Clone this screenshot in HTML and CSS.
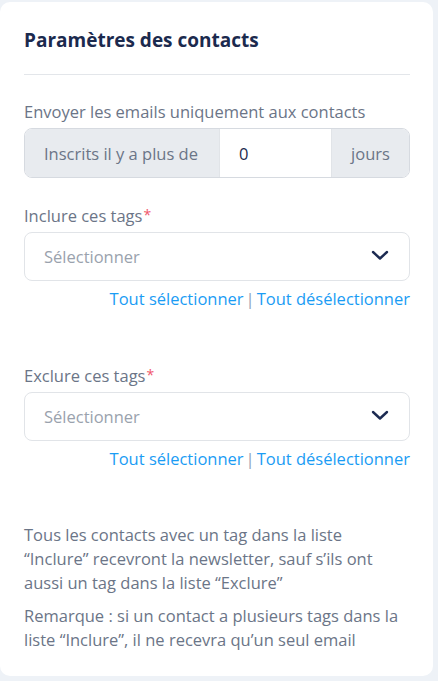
FILE: index.html
```html
<!DOCTYPE html>
<html lang="fr">
<head>
<meta charset="utf-8">
<link rel="stylesheet" href="styles.css">
</head>
<body>
<div class="card">
  <h2 class="title">Paramètres des contacts</h2>
  <hr class="divider">
  <div class="field">
    <div class="label">Envoyer les emails uniquement aux contacts</div>
    <div class="input-group">
      <span class="addon addon-left">Inscrits il y a plus de</span>
      <span class="input-value">0</span>
      <span class="addon addon-right">jours</span>
    </div>
  </div>
  <div class="field">
    <div class="label">Inclure ces tags<span class="req">*</span></div>
    <div class="select">
      <span class="placeholder">Sélectionner</span>
      <svg class="chevron" width="18" height="12" viewBox="0 0 18 12"><path d="M2 3 L9 9.5 L16 3" fill="none" stroke="#1c2b52" stroke-width="2.4" stroke-linecap="round" stroke-linejoin="round"/></svg>
    </div>
    <div class="links"><span class="link">Tout sélectionner</span><span class="sep">|</span><span class="link">Tout désélectionner</span></div>
  </div>
  <div class="field field-spaced">
    <div class="label">Exclure ces tags<span class="req">*</span></div>
    <div class="select">
      <span class="placeholder">Sélectionner</span>
      <svg class="chevron" width="18" height="12" viewBox="0 0 18 12"><path d="M2 3 L9 9.5 L16 3" fill="none" stroke="#1c2b52" stroke-width="2.4" stroke-linecap="round" stroke-linejoin="round"/></svg>
    </div>
    <div class="links"><span class="link">Tout sélectionner</span><span class="sep">|</span><span class="link">Tout désélectionner</span></div>
  </div>
  <p class="note note-first">Tous les contacts avec un tag dans la liste “Inclure” recevront la newsletter, sauf s’ils ont aussi un tag dans la liste “Exclure”</p>
  <p class="note">Remarque : si un contact a plusieurs tags dans la liste “Inclure”, il ne recevra qu’un seul email</p>
</div>
</body>
</html>
```
FILE: styles.css
```css
html, body {
  margin: 0;
  padding: 0;
  background: #eef2f7;
}
body {
  font-family: "Open Sans", "Noto Sans", sans-serif;
  width: 438px;
  height: 681px;
  overflow: hidden;
}
.card {
  background: #ffffff;
  width: 433px;
  box-sizing: border-box;
  margin: 2px 0 0 0;
  border-radius: 10px;
  padding: 26px 23px 24px 24px;
}
.title {
  margin: 0;
  font-size: 19px;
  line-height: 24px;
  font-weight: 700;
  color: #1b2a4e;
}
.divider {
  border: 0;
  border-top: 1px solid #e3e6ea;
  margin: 22px 0 0 0;
}
.field {
  margin-top: 26px;
}
.field-spaced {
  margin-top: 54px;
}
.label {
  font-size: 16.5px;
  line-height: 22px;
  color: #6b7587;
  margin-bottom: 5px;
}
.req {
  color: #f0566b;
  margin-left: 1px;
  font-size: 14px;
  vertical-align: 2px;
}
.input-group {
  display: flex;
  height: 50px;
  box-sizing: border-box;
  border: 1px solid #d6dae0;
  border-radius: 8px;
  overflow: hidden;
  font-size: 16.5px;
}
.addon {
  background: #e8ebef;
  color: #6b7587;
  display: flex;
  align-items: center;
}
.addon-left {
  width: 194px;
  padding-left: 19px;
  box-sizing: border-box;
}
.addon-right {
  width: 77px;
  justify-content: center;
  border-left: 1px solid #e1e4e8;
}
.input-value {
  flex: 1;
  background: #fff;
  display: flex;
  align-items: center;
  padding-left: 19px;
  color: #1b2a4e;
  border-left: 1px solid #e1e4e8;
}
.select {
  height: 49px;
  box-sizing: border-box;
  border: 1px solid #e1e4e8;
  border-radius: 8px;
  display: flex;
  align-items: center;
  justify-content: space-between;
  padding: 0 20px 0 19px;
}
.placeholder {
  font-size: 16.5px;
  color: #9aa2ad;
}
.chevron {
  display: block;
  margin-top: -3px;
}
.links {
  text-align: right;
  font-size: 16.5px;
  line-height: 22px;
  margin-top: 7px;
  color: #1a9cf4;
}
.sep {
  color: #8aa0b6;
  margin: 0 2px;
}
.note {
  margin: 9px 0 0 0;
  font-size: 16.5px;
  line-height: 24px;
  color: #6b7587;
}
.note-first {
  margin-top: 53px;
}
```
